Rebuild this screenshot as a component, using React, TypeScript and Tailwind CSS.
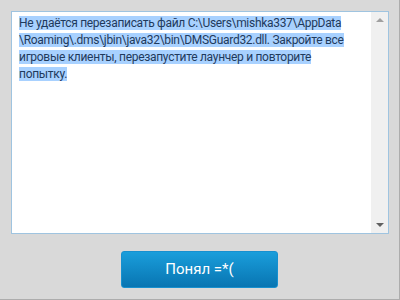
import React from 'react';

const lines = [
  'Не удаётся перезаписать файл C:\\Users\\mishka337\\AppData',
  '\\Roaming\\.dms\\jbin\\java32\\bin\\DMSGuard32.dll. Закройте все',
  'игровые клиенты, перезапустите лаунчер и повторите',
  'попытку.',
];

const App: React.FC = () => {
  return (
    <div className="w-[400px] h-[300px] bg-[#d9d9d9] border-r border-b border-[#adadad] flex flex-col font-['Roboto',sans-serif]">
      <div className="mt-[11px] ml-[11px] w-[378px] h-[223px] bg-white border border-[#9fc4e0] flex">
        <div className="flex-1 pl-[7px] pt-[3px] text-[12px] leading-[17px] tracking-[-0.3px] text-[#1f3a5c] whitespace-nowrap">
          {lines.map((l, i) => (
            <div key={i}>
              <span className="bg-[#a8d1ff]">{l}</span>
            </div>
          ))}
        </div>
        <div className="w-[17px] bg-[#f0f0f0] flex flex-col items-center justify-between py-[6px]">
          <div className="w-0 h-0 border-l-[4px] border-r-[4px] border-b-[4px] border-l-transparent border-r-transparent border-b-[#a0a0a0]" />
          <div className="w-0 h-0 border-l-[4px] border-r-[4px] border-t-[4px] border-l-transparent border-r-transparent border-t-[#606060]" />
        </div>
      </div>
      <div className="flex-1 flex items-center justify-center pt-[5px]">
        <button className="w-[157px] h-[37px] rounded-[3px] bg-gradient-to-b from-[#1a9edb] to-[#0875b2] border border-[#1790cf] text-white text-[15px]">
          Понял =*(
        </button>
      </div>
    </div>
  );
};

export default App;
